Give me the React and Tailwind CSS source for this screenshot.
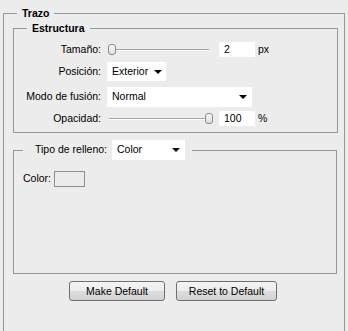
import React from "react";

const Arrow = () => (
  <svg width="8" height="4" viewBox="0 0 8 4">
    <polygon points="0,0 8,0 4,4" fill="#000" />
  </svg>
);

const Select = ({ value, className }) => (
  <div className={`flex items-center justify-between bg-white pl-[5px] ${className}`}>
    <span>{value}</span>
    <Arrow />
  </div>
);

const Slider = ({ thumbClass }) => (
  <div className="relative h-full w-[106px]">
    <div className="absolute left-[2px] right-[4px] top-[7px] h-[2px] border-t border-[#a3a3a3] bg-white" />
    <div
      className={`absolute top-[2px] h-[11px] w-[8px] rounded-[3px] border border-[#8c8c8c] bg-[linear-gradient(to_bottom,#fafafa,#dcdcdc)] ${thumbClass}`}
    />
  </div>
);

const Field = ({ value }) => (
  <div className="ml-[6px] h-[15px] w-[36px] bg-white pl-[5px] leading-[15px]">{value}</div>
);

const Row = ({ label, children, className }) => (
  <div className={`flex items-center ${className}`}>
    <div className="w-[87px] text-right">{label}</div>
    <div className="ml-[6px] flex h-full items-center">{children}</div>
  </div>
);

const Button = ({ children, className }) => (
  <button
    className={`h-[20px] rounded-[3px] border border-[#707070] bg-[linear-gradient(to_bottom,#f4f4f4_0%,#ececec_50%,#dedede_50%,#d2d2d2_100%)] text-center leading-[18px] text-black ${className}`}
  >
    {children}
  </button>
);

export default function App() {
  return (
    <div className="h-[331px] w-[348px] overflow-hidden bg-[#ececec] pt-[6px] font-['Liberation_Sans',Arial,sans-serif] text-[10.5px] text-black">
      <fieldset className="ml-[3px] h-[340px] w-[342px] border border-[#979797]">
        <legend className="ml-[13px] px-[5px] font-bold leading-[14px]">Trazo</legend>

        <fieldset className="ml-[9px] mt-[1px] w-[325px] border border-[#979797]">
          <legend className="ml-[13px] px-[5px] font-bold leading-[14px]">Estructura</legend>
          <div className="pb-[6px] pt-[7px]">
            <Row label="Tamaño:" className="h-[15px]">
              <Slider thumbClass="left-[1px]" />
              <Field value="2" />
              <span className="ml-[3px]">px</span>
            </Row>
            <Row label="Posición:" className="mt-[5px] h-[19px]">
              <Select value="Exterior" className="h-[19px] w-[59px] pr-[4px]" />
            </Row>
            <Row label="Modo de fusión:" className="mt-[6px] h-[20px]">
              <Select value="Normal" className="h-[20px] w-[145px] pl-[4px] pr-[5px]" />
            </Row>
            <Row label="Opacidad:" className="mt-[4px] h-[15px]">
              <Slider thumbClass="left-[98px]" />
              <Field value="100" />
              <span className="ml-[3px]">%</span>
            </Row>
          </div>
        </fieldset>

        <fieldset className="ml-[9px] mt-[7px] w-[324px] border border-[#979797]">
          <legend className="ml-[9px] flex h-[20px] items-center pl-[12px] pr-[7px]">
            <span>Tipo de relleno:</span>
            <Select value="Color" className="ml-[5px] h-[20px] w-[73px] pr-[5px]" />
          </legend>
          <div className="h-[113px] pl-[9px] pt-[11px]">
            <div className="flex h-[16px] items-center">
              <span>Color:</span>
              <div className="ml-[3px] h-[16px] w-[31px] border border-[#8e8e8e] bg-[#ebebeb]" />
            </div>
          </div>
        </fieldset>

        <div className="mt-[7px] flex justify-center gap-[11px] pr-[2px]">
          <Button className="w-[96px]">Make Default</Button>
          <Button className="w-[101px]">Reset to Default</Button>
        </div>
      </fieldset>
    </div>
  );
}
